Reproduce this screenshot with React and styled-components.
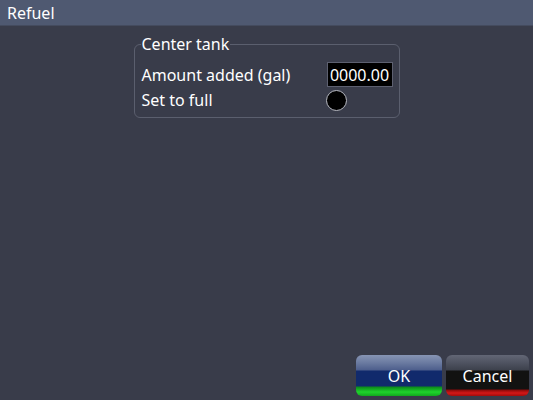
import React from "react";
import styled, { createGlobalStyle } from "styled-components";

const GlobalStyle = createGlobalStyle`
    html, body {
        margin: 0;
        padding: 0;
        background-color: #393c4a;
    }
    body {
        font-family: "Noto Sans", "DejaVu Sans", sans-serif;
        color: #ffffff;
    }
`;

const Screen = styled.div`
    width: 533px;
    height: 400px;
    display: flex;
    flex-direction: column;
    background-color: #393c4a;
    overflow: hidden;
`;

const TitleBar = styled.div`
    height: 26px;
    flex-shrink: 0;
    display: flex;
    align-items: center;
    padding-left: 7px;
    background-color: #4f5971;
    border-bottom: 1px solid #444b5e;
    box-sizing: border-box;
    font-size: 16px;
`;

const Content = styled.div`
    flex: 1;
    display: flex;
    flex-direction: column;
    align-items: center;
    padding-top: 8px;
`;

const Group = styled.fieldset`
    width: 266px;
    box-sizing: border-box;
    margin: 0;
    padding: 8px 6px 6px 6px;
    border: 1px solid #5b5f6e;
    border-radius: 6px;
`;

const GroupTitle = styled.legend`
    padding: 0 1px;
    font-size: 16px;
    line-height: 20px;
`;

const Row = styled.div`
    display: grid;
    grid-template-columns: 1fr 66px;
    align-items: center;
    height: ${(p) => p.$height}px;
    margin-top: ${(p) => p.$gap || 0}px;
    padding-left: 1px;
    font-size: 16px;
`;

const NumberBox = styled.div`
    height: 25px;
    box-sizing: border-box;
    background-color: #000000;
    border: 1px solid #5d6070;
    display: flex;
    align-items: center;
    justify-content: center;
    font-size: 16px;
`;

const Radio = styled.div`
    width: 21px;
    height: 21px;
    box-sizing: border-box;
    margin-left: -1px;
    border-radius: 50%;
    background-color: #000000;
    border: 1px solid #b8bac2;
`;

const Footer = styled.div`
    display: flex;
    justify-content: flex-end;
    gap: 4px;
    padding: 0 4px 4px 0;
`;

const Button = styled.button`
    width: ${(p) => p.$width}px;
    height: 41px;
    border: none;
    border-radius: 6px;
    padding: 0;
    color: #ffffff;
    font-family: "Noto Sans", "DejaVu Sans", sans-serif;
    font-size: 16px;
    cursor: pointer;
    background: ${(p) =>
        p.$variant === "ok"
            ? `linear-gradient(to bottom, #8795b4 0px, #6a7aa0 8px, #4d5e8c 15px, #112a6c 16px, #112a6c 31px, #0c8a1c 32px, #1fd42c 37px, #12a81e 41px)`
            : `linear-gradient(to bottom, #626675 0px, #4e5260 8px, #3d414c 15px, #121211 16px, #121211 34px, #8a0a0a 35px, #d41818 38px, #a00c0c 41px)`};
`;

export default function App() {
    return (
        <>
            <GlobalStyle />
            <Screen>
                <TitleBar>Refuel</TitleBar>
                <Content>
                    <Group>
                        <GroupTitle>Center tank</GroupTitle>
                        <Row $height={25}>
                            <span>Amount added (gal)</span>
                            <NumberBox>0000.00</NumberBox>
                        </Row>
                        <Row $height={22} $gap={2}>
                            <span>Set to full</span>
                            <Radio />
                        </Row>
                    </Group>
                </Content>
                <Footer>
                    <Button $variant="ok" $width={86}>OK</Button>
                    <Button $variant="cancel" $width={83}>Cancel</Button>
                </Footer>
            </Screen>
        </>
    );
}
